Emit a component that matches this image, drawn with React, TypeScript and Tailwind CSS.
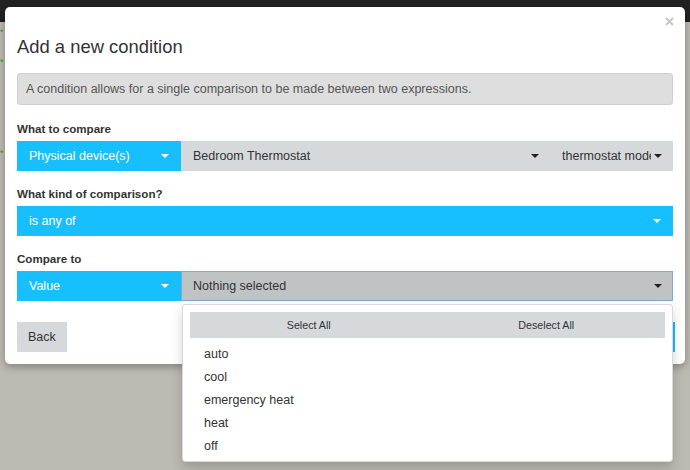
import React from 'react';

const Caret = ({ color }: { color: 'white' | 'dark' }) => (
  <span
    className={
      color === 'white'
        ? 'inline-block h-0 w-0 border-x-[4px] border-t-[4px] border-x-transparent border-t-white'
        : 'inline-block h-0 w-0 border-x-[4px] border-t-[4px] border-x-transparent border-t-[#222]'
    }
  />
);

const BlueSelect = ({ text, className = '' }: { text: string; className?: string }) => (
  <div
    className={`flex h-[30px] items-center justify-between bg-[#17bfff] pl-[12px] pr-[12px] text-[12.5px] text-white ${className}`}
  >
    <span className="whitespace-nowrap">{text}</span>
    <Caret color="white" />
  </div>
);

const GraySelect = ({ text, className = '' }: { text: string; className?: string }) => (
  <div
    className={`flex h-[30px] items-center justify-between gap-[3px] bg-[#d5d9db] pl-[12px] pr-[11px] text-[12.5px] text-[#333] ${className}`}
  >
    <span className="min-w-0 flex-1 overflow-hidden whitespace-nowrap">{text}</span>
    <Caret color="dark" />
  </div>
);

const Label = ({ children }: { children: React.ReactNode }) => (
  <div className="mb-[5px] text-[11.6px] font-bold leading-[15px] text-[#333]">{children}</div>
);

const options = ['auto', 'cool', 'emergency heat', 'heat', 'off'];

export default function App() {
  return (
    <div className="relative h-[470px] w-[690px] overflow-hidden bg-[#bdbab3] font-['Liberation_Sans',Arial,sans-serif]">
      {/* page behind the modal */}
      <div className="h-[22px] bg-[#222]" />
      <div className="flex flex-col text-[9px] leading-[9px] text-[#2e9e2e]">
        <span className="mt-[6px]">*</span>
        <span className="mt-[21px]">*</span>
        <span className="mt-[82px]">*</span>
      </div>

      {/* modal */}
      <div className="absolute left-[5px] top-[7px] w-[680px] rounded-[5px] bg-white px-[12px] pb-[12px] pt-[29px] shadow-[0_3px_9px_rgba(0,0,0,0.3)]">
        <button className="absolute right-[11px] top-[10px]">
          <svg width="9" height="9" viewBox="0 0 9 9">
            <path d="M1 1 L8 8 M8 1 L1 8" stroke="#c6c6c6" strokeWidth="2" />
          </svg>
        </button>

        <h4 className="text-[18.4px] leading-[22px] text-[#333]">Add a new condition</h4>

        <div className="mb-[16px] mt-[15px] rounded-[3px] border border-[#cfcfcf] bg-[#dedede] px-[8px] py-[8px] text-[12.5px] leading-[14px] text-[#555]">
          A condition allows for a single comparison to be made between two expressions.
        </div>

        <div className="mb-[15px]">
          <Label>What to compare</Label>
          <div className="flex">
            <BlueSelect text="Physical device(s)" className="w-[164px]" />
            <GraySelect text="Bedroom Thermostat" className="flex-1" />
            <GraySelect text="thermostat mode" className="w-[123px]" />
          </div>
        </div>

        <div className="mb-[15px]">
          <Label>What kind of comparison?</Label>
          <BlueSelect text="is any of" />
        </div>

        <div>
          <Label>Compare to</Label>
          <div className="flex">
            <BlueSelect text="Value" className="w-[164px]" />
            <div className="relative flex-1">
              <div className="flex h-[30px] items-center justify-between border border-[#7fa8dc] bg-[#bfc3c4] pl-[11px] pr-[10px] text-[12.5px] text-[#333]">
                <span>Nothing selected</span>
                <Caret color="dark" />
              </div>

              {/* open multi-select menu */}
              <div className="absolute left-[1px] right-0 top-[33px] z-10 rounded-[4px] border border-[rgba(0,0,0,0.15)] bg-white px-[7px] pb-[3px] pt-[7px] shadow-[0_6px_12px_rgba(0,0,0,0.175)]">
                <div className="flex h-[26px] bg-[#d5d9db] text-[10.7px] text-[#333]">
                  <button className="flex-1">Select All</button>
                  <button className="flex-1">Deselect All</button>
                </div>
                <ul className="mt-[5px]">
                  {options.map((o) => (
                    <li key={o} className="h-[23px] pl-[14px] text-[12.5px] leading-[23px] text-[#333]">
                      {o}
                    </li>
                  ))}
                </ul>
              </div>
            </div>
          </div>
        </div>

        <div className="mt-[21px] flex justify-between">
          <button className="h-[30px] bg-[#d5d9db] px-[11px] text-[12.5px] text-[#333]">Back</button>
          <button className="mr-[-2px] h-[30px] bg-[#17bfff] px-[12px] text-[12.5px] text-white">Next</button>
        </div>
      </div>
    </div>
  );
}
